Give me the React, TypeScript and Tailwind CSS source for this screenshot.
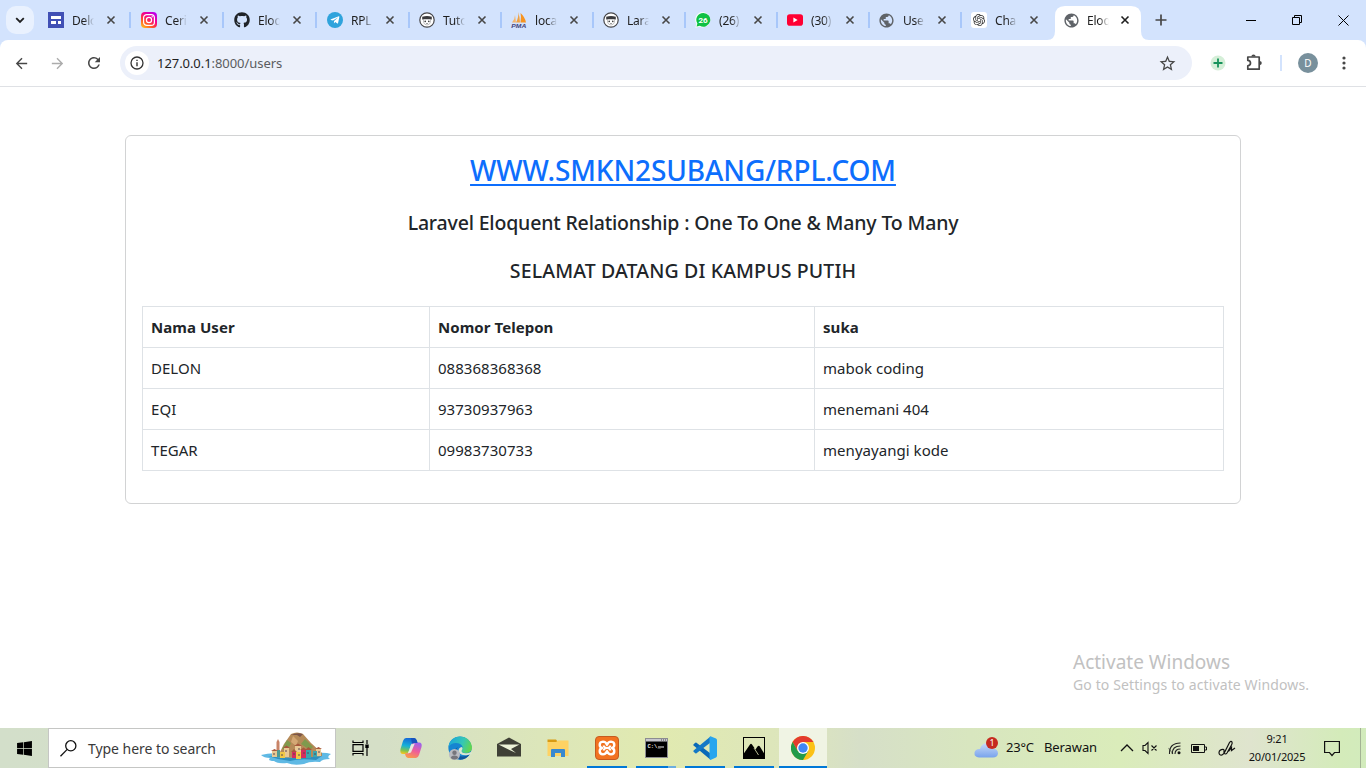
import React from "react";
import { FaGithub, FaWindows, FaTelegramPlane } from "react-icons/fa";
import { MdPublic, MdStarBorder, MdRefresh, MdArrowBack, MdArrowForward } from "react-icons/md";
import { SiOpenai } from "react-icons/si";

const Sites = () => (
  <svg width="16" height="16" viewBox="0 0 16 16">
    <rect width="16" height="16" fill="#4150b5" />
    <path d="M3 4h10v3H3zM3 9h5v3H3zM10 9h3v3h-3z" fill="#fff" />
  </svg>
);

const Instagram = () => (
  <svg width="16" height="16" viewBox="0 0 16 16">
    <defs>
      <linearGradient id="ig" x1="0.1" y1="1" x2="0.8" y2="0">
        <stop offset="0" stopColor="#ffc31f" />
        <stop offset="0.35" stopColor="#ff4b2b" />
        <stop offset="0.65" stopColor="#f5008f" />
        <stop offset="1" stopColor="#b900f0" />
      </linearGradient>
    </defs>
    <rect width="16" height="16" rx="4" fill="url(#ig)" />
    <rect x="2.6" y="2.6" width="10.8" height="10.8" rx="3.2" fill="none" stroke="#fff" strokeWidth="1.2" />
    <circle cx="8" cy="8" r="2.6" fill="none" stroke="#fff" strokeWidth="1.2" />
    <circle cx="11.2" cy="4.8" r="0.7" fill="#fff" />
  </svg>
);

const Telegram = () => (
  <span className="flex size-4 items-center justify-center rounded-full bg-[#2fa3dc]">
    <FaTelegramPlane size={10} color="#fff" className="mr-px" />
  </span>
);

const Face = () => (
  <svg width="16" height="16" viewBox="0 0 16 16">
    <circle cx="8" cy="8" r="7.2" fill="#fff" stroke="#47474a" strokeWidth="1.2" />
    <path d="M3.200 4.800Q8 3 12.800 4.800V7.600H3.200Z" fill="#3a3a3d" />
    <path d="M4.500 7.600V10Q5 12.800 8 13Q11 12.800 11.500 10V7.600" fill="#fff" stroke="#888" strokeWidth="0.5" />
    <circle cx="6.200" cy="9.400" r="0.8" fill="#333" />
    <circle cx="9.800" cy="9.400" r="0.8" fill="#333" />
    <path d="M7 11.500h2" stroke="#777" strokeWidth="0.7" />
  </svg>
);

const PhpMyAdmin = () => (
  <svg width="16" height="16" viewBox="0 0 16 16">
    <path d="M1 10.500Q4 7 4 3L5 10.500Z" fill="#f5b569" />
    <path d="M5 10.500Q8 5 7 0Q9 5 9 10.500Z" fill="#f0a040" />
    <path d="M9.500 10.500Q10.500 5 9.500 1Q14 5 15 10.500Z" fill="#f79420" />
    <text x="0.3" y="15.700" fontSize="6.200" fontWeight="700" fontStyle="italic" textLength="15" lengthAdjust="spacingAndGlyphs" fontFamily="Liberation Sans, sans-serif" fill="#42427a">PMA</text>
  </svg>
);

const WhatsApp = () => (
  <svg width="16" height="16" viewBox="0 0 16 16">
    <path d="M8.200 0A7.700 7.700 0 1 1 4.500 14.700L0.300 15.800L1.400 11.800A7.700 7.700 0 0 1 8.200 0Z" fill="#f4fff6" />
    <path d="M8.200 0.900A6.900 6.900 0 1 1 4.800 13.700L1.600 14.500L2.400 11.500A6.900 6.900 0 0 1 8.200 0.900Z" fill="#0fc143" />
    <text x="8" y="10.800" fontSize="8" fontWeight="700" textAnchor="middle" fontFamily="Roboto, sans-serif" fill="#fff">26</text>
  </svg>
);

const YouTube = () => (
  <svg width="16" height="16" viewBox="0 0 16 16">
    <rect y="2.300" width="16" height="11.400" rx="2.800" fill="#ff0033" />
    <path d="M6.400 5.500L10.600 8L6.400 10.500Z" fill="#fff" />
  </svg>
);

const Globe = () => <MdPublic size={17} color="#5f6368" className="-ml-px shrink-0" />;

const ChatGpt = () => (
  <span className="flex size-4 items-center justify-center rounded-[3px] bg-white">
    <SiOpenai size={12} color="#333" />
  </span>
);

const tabs = [
  { icon: <Sites />, label: "Delo" },
  { icon: <Instagram />, label: "Ceri" },
  { icon: <FaGithub size={16} color="#1f2328" />, label: "Eloq" },
  { icon: <Telegram />, label: "RPL" },
  { icon: <Face />, label: "Tuto" },
  { icon: <PhpMyAdmin />, label: "loca" },
  { icon: <Face />, label: "Lara" },
  { icon: <WhatsApp />, label: "(26)" },
  { icon: <YouTube />, label: "(30)" },
  { icon: <Globe />, label: "Use" },
  { icon: <ChatGpt />, label: "Cha" },
  { icon: <Globe />, label: "Eloq" },
];

const TabClose = ({ active }: { active: boolean }) => (
  <svg width="10" height="10" viewBox="0 0 10 10" className={active ? "ml-[11px] shrink-0" : "ml-3 shrink-0"}>
    <path d="M1.500 1.500L8.500 8.500M8.500 1.500L1.500 8.500" stroke={active ? "#1f1f1f" : "#474747"} strokeWidth="1.600" />
  </svg>
);

function TabStrip() {
  return (
    <div className="flex h-10 bg-[#d3e3fd]">
      <div className="ml-1.5 mt-1.5 flex size-7 items-center justify-center rounded-[10px] bg-[#e9f1fe]">
        <svg width="10" height="7" viewBox="0 0 10 7">
          <path d="M1.200 1.200L5 5L8.800 1.200" stroke="#1f1f1f" strokeWidth="1.800" fill="none" />
        </svg>
      </div>
      <div className="ml-1 flex">
        {tabs.map((tab, i) => {
          const active = i === tabs.length - 1;
          return (
            <div key={i} className={`relative flex h-10 items-center pl-2.5 ${i < 3 ? "w-[93px]" : "w-[92px]"}`}>
              {active && (
                <svg width="102" height="34" viewBox="0 0 102 34" className="absolute -left-1.5 top-1.5">
                  <path d="M0 34Q8 34 8 25V10Q8 0 18 0H84Q94 0 94 10V25Q94 34 102 34Z" fill="#fff" />
                </svg>
              )}
              <span className={`relative flex size-4 shrink-0 items-center ${active ? "left-px" : ""}`}>{tab.icon}</span>
              <span className="relative ml-2 mt-px w-[22px] shrink-0 whitespace-nowrap text-[12px] leading-5 tracking-[-0.200px] text-[#1f1f1f] [mask-image:linear-gradient(to_right,black_55%,transparent)]">
                {tab.label}
              </span>
              <span className="relative flex">
                <TabClose active={active} />
              </span>
              {i < tabs.length - 2 && <span className="ml-[13px] h-4 w-0.5 shrink-0 bg-[#a8c7fa]" />}
            </div>
          );
        })}
      </div>
      <div className="flex w-4 items-center justify-end">
        <svg width="12" height="12" viewBox="0 0 12 12" className="-mr-1.5 shrink-0">
          <path d="M6 0.500V11.500M0.500 6H11.500" stroke="#474747" strokeWidth="1.700" />
        </svg>
      </div>
      <div className="ml-auto flex">
        <div className="flex w-[46px] items-center justify-center">
          <span className="h-px w-2.5 bg-black" />
        </div>
        <div className="flex w-[46px] items-center justify-center">
          <svg width="10" height="10" viewBox="0 0 10 10" fill="none" stroke="#000">
            <path d="M0.500 2.500H7.500V9.500H0.500ZM2.500 2.500V0.500H9.500V7.500H7.500" />
          </svg>
        </div>
        <div className="flex w-[46px] items-center justify-center">
          <svg width="11" height="11" viewBox="0 0 11 11">
            <path d="M0.500 0.500L10.500 10.500M10.500 0.500L0.500 10.500" stroke="#000" />
          </svg>
        </div>
      </div>
    </div>
  );
}

const Puzzle = () => (
  <svg width="17" height="17" viewBox="0 0 17 17" className="mb-px ml-5">
    <path d="M1.800 3H13.200V15.200H1.800V11.800Q4.500 11.500 4.500 9.100Q4.500 6.700 1.800 6.400Z" fill="none" stroke="#474747" strokeWidth="1.700" strokeLinejoin="round" />
    <path d="M5.300 2.600Q5.500 0.500 7.500 0.500Q9.500 0.500 9.700 2.600ZM13.500 7Q15.800 7 15.800 9.100Q15.800 11.200 13.500 11.200Z" fill="#474747" />
  </svg>
);

function Toolbar() {
  return (
    <div className="bg-[#d3e3fd]">
      <div className="flex h-[47px] items-center rounded-t-lg border-b border-[#dfe1e5] bg-white">
        <div className="flex w-[120px] items-center pl-[13px]">
          <MdArrowBack size={17} color="#474747" />
          <MdArrowForward size={17} color="#acacac" className="ml-[19px]" />
          <MdRefresh size={18} color="#474747" className="ml-[19px]" />
        </div>
        <div className="flex h-[34px] w-[1072px] items-center rounded-full bg-[#ecf0fa] pl-[5px] pr-[15px]">
          <div className="flex size-6 items-center justify-center rounded-full bg-white">
            <svg width="14" height="14" viewBox="0 0 14 14">
              <circle cx="7" cy="7" r="6" fill="none" stroke="#333" strokeWidth="1.300" />
              <path d="M7 6.200V10.300M7 3.700V5" stroke="#333" strokeWidth="1.400" />
            </svg>
          </div>
          <span className="ml-2 mt-px whitespace-nowrap text-[13px] tracking-[-0.060px] text-[#5a5c60]">
            <span className="text-[#1f1f1f]">127.0.0.1</span>:8000/users
          </span>
          <MdStarBorder size={19} color="#474747" className="ml-auto" />
        </div>
        <svg width="16" height="16" viewBox="0 0 16 16" className="ml-[18px]">
          <circle cx="8" cy="8" r="7.500" fill="#d5efd8" />
          <path d="M8 3.500V12.500M3.500 8H12.500" stroke="#17935b" strokeWidth="1.800" />
        </svg>
        <Puzzle />
        <span className="ml-[17px] h-4 w-0.5 bg-[#d3e3fd]" />
        <span className="ml-4 flex size-5 items-center justify-center rounded-full bg-[#78909c] text-[10px] text-white">D</span>
        <svg width="4" height="14" viewBox="0 0 4 14" className="ml-6" fill="#474747">
          <circle cx="2" cy="2" r="1.600" />
          <circle cx="2" cy="7" r="1.600" />
          <circle cx="2" cy="12" r="1.600" />
        </svg>
      </div>
    </div>
  );
}

const users = [
  ["DELON", "088368368368", "mabok coding"],
  ["EQI", "93730937963", "menemani 404"],
  ["TEGAR", "09983730733", "menyayangi kode"],
];

function Page() {
  return (
    <main className="relative grow bg-white px-[125px] pt-12 text-[#212529]">
      <div className="h-[369px] rounded-md border border-[#d2d3d4] px-4 pt-[17px] text-center">
        <h3 className="text-[28px] font-medium leading-[34px] tracking-[-0.100px]">
          <a className="text-[#0d6efd] underline decoration-2 underline-offset-[3px]">WWW.SMKN2SUBANG/RPL.COM</a>
        </h3>
        <h5 className="mt-6 text-[19.500px] font-medium leading-6 tracking-[-0.170px]">Laravel Eloquent Relationship : One To One &amp; Many To Many</h5>
        <h5 className="mt-6 text-[19.500px] font-medium leading-6 tracking-[0.140px]">SELAMAT DATANG DI KAMPUS PUTIH</h5>
        <table className="mt-[23px] w-[1082px] table-fixed border-collapse text-left text-[15px]">
          <colgroup>
            <col className="w-[287px]" />
            <col className="w-[385px]" />
            <col />
          </colgroup>
          <thead>
            <tr className="h-[41px]">
              {["Nama User", "Nomor Telepon", "suka"].map((h) => (
                <th key={h} className="border border-[#dee2e6] px-2 font-bold tracking-[0.050px]">{h}</th>
              ))}
            </tr>
          </thead>
          <tbody>
            {users.map((row) => (
              <tr key={row[0]} className="h-[41px]">
                {row.map((cell) => (
                  <td key={cell} className="border border-[#dee2e6] px-2 tracking-[0.040px]">{cell}</td>
                ))}
              </tr>
            ))}
          </tbody>
        </table>
      </div>
      <div className="absolute left-[1073px] top-[563px] whitespace-nowrap text-[#c1c1c1]">
        <div className="text-[19px] leading-6">Activate Windows</div>
        <div className="text-[14px] leading-[22px] tracking-[0.120px]">Go to Settings to activate Windows.</div>
      </div>
    </main>
  );
}

const Island = () => (
  <svg width="72" height="34" viewBox="0 0 72 34">
    <path d="M1 23Q12 20 22 22L55 21Q66 20 71 22Q66 25 70 27Q62 27 60 30Q50 29 44 32Q34 34 27 31Q18 32 14 29Q7 29 10 26Q4 26 1 23Z" fill="#5fb9e4" />
    <path d="M8 24Q30 28 62 24L56 28Q40 26 30 29L18 27Z" fill="#2f8fbd" />
    <path d="M20 20L24 12L31 2Q37 -1 43 2L51 11L62 21L62 24Q36 27 20 25Z" fill="#b58a58" />
    <path d="M22 17L27 8L31 11L28 18ZM45 7L53 15L50 18L41 12Z" fill="#7f9a4d" />
    <path d="M31 3Q37 0 43 2L40 5L37 3Z" fill="#7b5549" />
    <path d="M33 4L38 9L36 14L31 10Z" fill="#d4a774" />
    <path d="M16.500 10L18 7L19.500 10V20H16.500Z" fill="#c98468" />
    <path d="M12 19H17V25H12ZM24 16H29V25H24ZM35 14H41V20H35ZM56 17H61V24H56Z" fill="#e8c894" />
    <path d="M17 18H20V25H17Z" fill="#4f9a93" />
    <path d="M41 18H46V26H41ZM32 20H36V26H32Z" fill="#d62c5e" />
    <path d="M36 20H41V27H36ZM20 20H25V26H20Z" fill="#f0c845" />
    <path d="M46 18H51V26H46ZM53 19H57V25H53Z" fill="#3aa6b0" />
    <path d="M11 19L14.500 17L18 19ZM23 16L26.500 13.500L30 16ZM31 20L34 17L37 20ZM45 18L48.500 15L52 18ZM55 17L58.500 15L62 17ZM34 14L38 11.500L42 14ZM40 18L43.500 15.500L47 18Z" fill="#a9573c" />
    <path d="M26 18V20M34 21V23M39 16V18M39 22V24M44 20V22M48 20V22M55 21V23M59 19V21M14 21V23M22 22V24" stroke="#5a4650" strokeWidth="1" />
  </svg>
);

const TaskView = () => (
  <svg width="17" height="16" viewBox="0 0 17 16" fill="none" stroke="#000" strokeWidth="1.200" className="mr-[3px]">
    <path d="M1 0.500V2.500H11V0.500M1 15.500V13.500H11V15.500M1 4.600H11V11.400H1ZM15 0V4M15 8V16" />
    <path d="M13.300 4.500H16.700V8H13.300Z" fill="#000" stroke="none" />
  </svg>
);

const Copilot = () => (
  <svg width="24" height="24" viewBox="0 0 24 24">
    <defs>
      <linearGradient id="cpA" x1="0.500" y1="0" x2="0.300" y2="1">
        <stop offset="0" stopColor="#1565d8" />
        <stop offset="0.500" stopColor="#16b1d8" />
        <stop offset="0.800" stopColor="#7cc353" />
        <stop offset="1" stopColor="#f3c51f" />
      </linearGradient>
      <linearGradient id="cpB" x1="0.700" y1="0" x2="0.300" y2="1">
        <stop offset="0" stopColor="#9d62ec" />
        <stop offset="0.500" stopColor="#ee5c9b" />
        <stop offset="1" stopColor="#fb9a4b" />
      </linearGradient>
    </defs>
    <path d="M7 2H15Q17 2 18 5L18.500 7H15Q12.500 7 11.800 9L10 15Q9 18 6 18H4Q0.500 18 1.500 13L4 5Q5 2 7 2Z" fill="url(#cpA)" />
    <path d="M17 22H9Q7 22 6.300 19L6 17.500Q9.500 18 10.500 15L12.500 9Q13.300 6.500 17 6.500H20Q23.500 6.500 22.500 11L20 19Q19 22 17 22Z" fill="url(#cpB)" />
    <path d="M12.300 8.500L15.800 7.500L12 16.500L8.800 17.500Z" fill="#e4eade" />
    <path d="M12 2H15Q17 2 18 5L18.500 7H15Q13.500 7 13 8Z" fill="#1853bd" />
  </svg>
);

const Edge = () => (
  <svg width="24" height="24" viewBox="0 0 24 24">
    <defs>
      <linearGradient id="edA" x1="0" y1="0.200" x2="1" y2="0.500">
        <stop offset="0" stopColor="#1aa5dc" />
        <stop offset="0.600" stopColor="#35c7b5" />
        <stop offset="1" stopColor="#62d64e" />
      </linearGradient>
    </defs>
    <circle cx="12" cy="12" r="11.600" fill="#1685d1" />
    <path d="M0.500 11Q2 0.500 12 0.400Q22 0.500 24 11Q24 17 17.500 17Q13 17 13.500 14.500Q15 13 14.500 10.500Q13 7 8 7Q3 7 0.500 11Z" fill="url(#edA)" />
    <path d="M10 11Q7 14 9 18Q13 23 22 18Q18 24 12 23.700Q5 22 6.500 15Q7.500 12 10 11Z" fill="#12569b" />
    <path d="M13.700 14.500Q13 17 17.500 17.200Q20 17.500 23 16L24 18L20 19Q12 20 10.500 15.500Q10 12 13.500 11Q15.500 12 13.700 14.500Z" fill="#dce6cf" />
    <circle cx="6.500" cy="18.500" r="5.500" fill="#b9bbc1" />
    <circle cx="6.500" cy="16.800" r="2.200" fill="#76767c" />
    <path d="M2.800 22Q3 19.500 6.500 19.500Q10 19.500 10.200 22Q6.500 25 2.800 22Z" fill="#76767c" />
  </svg>
);

const Mail = () => (
  <svg width="24" height="20" viewBox="0 0 24 20" className="mb-0.5">
    <path d="M0 7L12 0.500L24 7V19.500H0Z" fill="#3f4036" />
    <path d="M1.500 7.500H22.500L14 12L19 16L12.500 13Z" fill="#edf2d8" />
  </svg>
);

const Folder = () => (
  <svg width="22" height="20" viewBox="0 0 22 20">
    <path d="M0.500 1.500H9L11 4H0.500Z" fill="#d99b13" />
    <path d="M0.500 4H9L11 2.500H21.500V18H0.500Z" fill="#fed263" />
    <path d="M4 19V12Q4 11 5 11H17Q18 11 18 12V19H14V15H8V19Z" fill="#3989cf" />
  </svg>
);

const Xampp = () => (
  <svg width="24" height="24" viewBox="0 0 24 24">
    <rect x="0.500" y="0.500" width="23" height="23" rx="3.500" fill="#f27320" stroke="#c55b20" />
    <g fill="none" stroke="#fff" strokeWidth="2.400" strokeLinejoin="round">
      <path d="M12 8.800Q10.800 5.600 8 5.600Q4.600 5.800 4.700 9Q4.800 11.200 7 12Q4.800 12.800 4.700 15Q4.600 18.200 8 18.400Q10.800 18.400 12 15.200Q13.200 18.400 16 18.400Q19.400 18.200 19.300 15Q19.200 12.800 17 12Q19.200 11.200 19.300 9Q19.400 5.800 16 5.600Q13.200 5.600 12 8.800Z" />
      <path d="M8.500 9.500Q9 12 12 12Q15 12 15.500 9.500M8.500 14.500Q9 12 12 12Q15 12 15.500 14.500" strokeWidth="1.800" />
    </g>
  </svg>
);

const Cmd = () => (
  <svg width="23" height="20" viewBox="0 0 23 20">
    <rect x="0.500" y="0.500" width="22" height="19" fill="#000" stroke="#8c8c91" />
    <path d="M1 1H22V3.500H1Z" fill="#c7c7cd" />
    <path d="M16 2H17M18 2H19M20 2H21" stroke="#444" />
    <text x="2.500" y="10" fontSize="5.500" fontWeight="700" fontFamily="Liberation Mono, monospace" fill="#e7e7e7">C:\_</text>
    <path d="M13 9H19" stroke="#eee" />
  </svg>
);

const VsCode = () => (
  <svg width="24" height="24" viewBox="0 0 24 24">
    <path d="M0.600 8.300L2.300 6.800Q2.900 6.400 3.500 6.800L17.500 17.500V23.700L0.600 9.500Q0 8.900 0.600 8.300Z" fill="#0a69b8" />
    <path d="M0.600 15.800L2.300 17.300Q2.900 17.700 3.500 17.300L17.500 6.600V0.400L0.600 14.600Q0 15.200 0.600 15.800Z" fill="#1479c6" />
    <path d="M17.500 0.200L23 2.600Q24 3.100 24 4.200V19.800Q24 20.900 23 21.400L17.500 23.900L16.500 23V1Z" fill="#27a5ee" />
  </svg>
);

const Photos = () => (
  <svg width="22" height="22" viewBox="0 0 22 22">
    <rect x="0.500" y="0.500" width="21" height="21" fill="none" stroke="#000" />
    <path d="M0.500 17L7 7.500Q8 6 9 7.500L12.500 12.500L14.500 9.500Q16 8 17 9.800L21.500 17V21.500H0.500Z" fill="#000" />
    <path d="M11 11L15.500 18" stroke="#e3eab8" strokeWidth="0.800" />
  </svg>
);

const Chrome = () => (
  <svg width="24" height="24" viewBox="0 0 24 24">
    <circle cx="12" cy="12" r="12" fill="#fbc116" />
    <path d="M1.600 6A12 12 0 0 1 22.400 6H12L6.800 15Z" fill="#e33b2e" />
    <path d="M1.600 6A12 12 0 0 0 12 24L17.200 15H6.800Z" fill="#229b4b" />
    <circle cx="12" cy="12" r="6" fill="#fff" />
    <circle cx="12" cy="12" r="4.700" fill="#4086f4" />
  </svg>
);

const apps = [
  { icon: <Copilot /> },
  { icon: <Edge /> },
  { icon: <Mail /> },
  { icon: <Folder /> },
  { icon: <Xampp />, open: true },
  { icon: <Cmd />, open: true, stacked: true },
  { icon: <VsCode />, open: true },
  { icon: <Photos />, open: true },
  { icon: <Chrome />, open: true, active: true },
];

const Weather = () => (
  <svg width="26" height="22" viewBox="0 0 26 22">
    <defs>
      <linearGradient id="cloud" x1="0" y1="0" x2="0" y2="1">
        <stop offset="0" stopColor="#c7daf8" />
        <stop offset="1" stopColor="#78a3ec" />
      </linearGradient>
    </defs>
    <path d="M5 20.500Q0 20 0.500 15.500Q1.500 11.500 6 12Q8 5.500 14 6.500Q18 7.500 19 11.500Q24 12 24 16.500Q23.500 20.500 19 20.500Z" fill="url(#cloud)" />
    <circle cx="18" cy="6" r="6" fill="#c62b20" />
    <text x="18" y="9.200" fontSize="9" textAnchor="middle" fontFamily="Noto Sans, sans-serif" fill="#fff">1</text>
  </svg>
);

function Taskbar() {
  return (
    <footer className="flex h-10 bg-[linear-gradient(90deg,#d3dfca_0px,#d5dfc7_380px,#dce6ba_540px,#e1eab0_660px,#dce5bd_800px,#d6dfc8_860px,#d8e6bf_970px,#daecba_1120px,#dfe4ce_1250px,#d4ebba_1340px,#d2ebbc_1366px)] text-[#111]">
      <div className="flex w-12 items-center justify-center">
        <FaWindows size={17} color="#000" />
      </div>
      <div className="flex w-72 items-center border border-[#c5c6c4] bg-white pl-[11px] pr-[3px]">
        <svg width="17" height="17" viewBox="0 0 17 17" fill="none" stroke="#111" strokeWidth="1.300">
          <circle cx="10.800" cy="5.800" r="5.100" />
          <path d="M7.200 9.400L0.500 16.200" />
        </svg>
        <span className="ml-[11px] whitespace-nowrap text-[14px] tracking-[-0.050px] text-[#3a3a3a]">Type here to search</span>
        <span className="ml-auto mt-px"><Island /></span>
      </div>
      <div className="flex w-[51px] items-center justify-center">
        <TaskView />
      </div>
      <div className="flex gap-px">
        {apps.map((app, i) => (
          <div key={i} className={app.active ? "flex w-12 flex-col items-center bg-[#f0f4e4]" : "flex w-12 flex-col items-center"}>
            <div className="flex h-[38px] items-center pt-0.5">{app.icon}</div>
            {app.open && (
              <div className={app.active ? "h-0.5 w-12 bg-[#0078d7]" : "flex h-0.5 w-10 justify-end bg-[#0078d7]"}>
                {app.stacked && <span className="h-0.5 w-2 bg-[#6caee0]" />}
              </div>
            )}
          </div>
        ))}
      </div>
      <div className="ml-auto flex items-center">
        <Weather />
        <span className="ml-1.5 w-[38px] whitespace-nowrap text-[13px] tracking-[-0.200px]">23°C</span>
        <span className="w-[76px] whitespace-nowrap text-[13px] tracking-[-0.100px]">Berawan</span>
        <svg width="14" height="8" viewBox="0 0 14 8" fill="none" stroke="#111" strokeWidth="1.300">
          <path d="M1 7L7 1L13 7" />
        </svg>
        <svg width="16" height="14" viewBox="0 0 16 14" fill="none" stroke="#111" strokeWidth="1.100" className="ml-2">
          <path d="M1 4.500H3L6 1.500V12.500L3 9.500H1ZM9.500 4.500L14.500 9.500M14.500 4.500L9.500 9.500" />
        </svg>
        <svg width="14" height="14" viewBox="0 0 14 14" fill="none" stroke="#222" strokeWidth="1.100" className="ml-[10px]">
          <path d="M1.500 13Q1 2 12.500 2M4.300 13Q4 5 12.500 5M7 13Q7 8 12.500 8" />
          <circle cx="11" cy="11.700" r="1.500" fill="#111" stroke="none" />
          <path d="M0.500 7L5 13" opacity="0.500" />
        </svg>
        <svg width="16" height="9" viewBox="0 0 16 9" fill="none" stroke="#111" className="ml-[9px]">
          <path d="M0.500 0.500H13.500V8.500H0.500ZM14 3H15.500V6H14" />
          <path d="M2 2H8V7H2Z" fill="#111" stroke="none" />
        </svg>
        <svg width="18" height="17" viewBox="0 0 18 17" fill="none" stroke="#111" strokeWidth="1.200" className="ml-[11px]">
          <path d="M6 9.500Q1.500 9 1 12.500Q1 15.500 4 15Q6 14 7 11.500L11.500 2.500Q13 0.500 14 2Q14.500 3.500 13.500 5L9 13Q7.500 15 6 13L6 9.500M10.500 11.500L13.500 7.500V10.500L17 8" />
        </svg>
        <div className="ml-[11px] w-[60px] whitespace-nowrap text-center text-[11px] leading-[18px] tracking-[-0.200px]">
          <div>9:21</div>
          <div>20/01/2025</div>
        </div>
        <svg width="16" height="17" viewBox="0 0 16 17" fill="none" stroke="#111" strokeWidth="1.200" className="ml-[17px]">
          <path d="M0.600 1.500H15.400V12.500H10.500L8 15.500L5.500 12.500H0.600Z" />
        </svg>
        <span className="ml-5 mr-[5px] h-10 w-px bg-[#a3b394]" />
      </div>
    </footer>
  );
}

export default function App() {
  return (
    <div className="flex h-[768px] w-[1366px] flex-col overflow-hidden font-['Noto_Sans',sans-serif]">
      <TabStrip />
      <Toolbar />
      <Page />
      <Taskbar />
    </div>
  );
}
